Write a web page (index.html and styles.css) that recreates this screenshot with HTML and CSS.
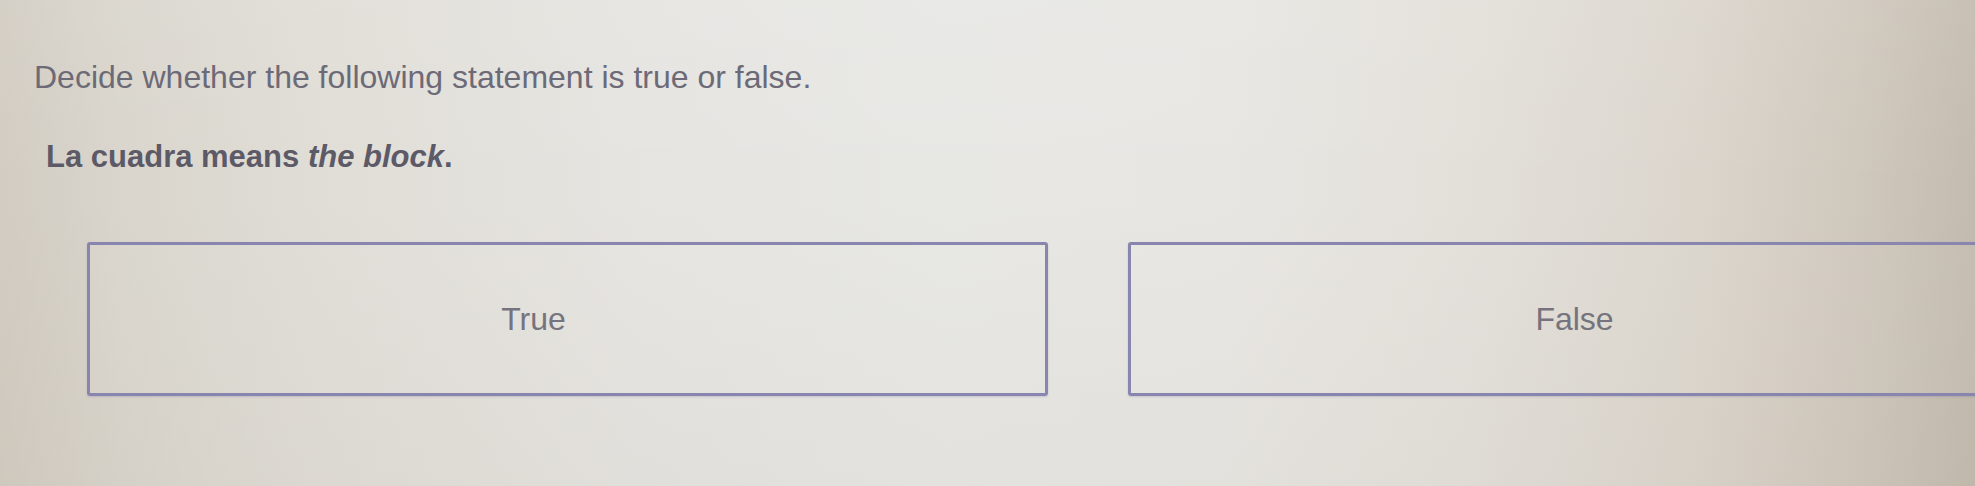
FILE: index.html
```html
<!DOCTYPE html>
<html lang="en">
<head>
<meta charset="utf-8">
<title>True or False</title>
<link rel="stylesheet" href="styles.css">
</head>
<body>
<main class="quiz">
  <p class="prompt">Decide whether the following statement is true or false.</p>
  <p class="statement">La cuadra means <em>the block</em>.</p>
  <div class="options">
    <button class="option" type="button"><span class="option-label">True</span></button>
    <button class="option" type="button"><span class="option-label">False</span></button>
  </div>
</main>
</body>
</html>
```

FILE: styles.css
```css
html, body {
  margin: 0;
  width: 1975px;
  height: 486px;
  overflow: hidden;
}

body {
  font-family: "Liberation Sans", Arial, sans-serif;
  background:
    linear-gradient(180deg, rgba(255, 255, 255, 0.08) 0%, rgba(255, 255, 255, 0) 40%, rgba(120, 100, 80, 0.04) 100%),
    linear-gradient(90deg,
      #d2ccc2 0%,
      #d9d5cc 6%,
      #e0ddd6 16%,
      #e5e4e0 32%,
      #e7e7e4 48%,
      #e7e6e2 62%,
      #e3e0da 74%,
      #dbd5cc 86%,
      #cfc8bd 94%,
      #c3bbaf 100%);
}

.quiz {
  padding: 59px 0 0 34px;
}

.prompt {
  margin: 0;
  font-size: 32px;
  line-height: 1.15;
  color: #6d6a77;
}

.statement {
  margin: 43px 0 0;
  padding-left: 12px;
  font-size: 31px;
  line-height: 1.15;
  font-weight: bold;
  color: #5d5a67;
}

.statement em {
  font-style: italic;
}

.options {
  display: flex;
  gap: 80px;
  margin-top: 68px;
  padding-left: 53px;
}

.option {
  flex: 0 0 961px;
  height: 154px;
  box-sizing: border-box;
  display: flex;
  align-items: center;
  justify-content: center;
  padding: 0 68px 0 0;
  border: 3px solid #8885ae;
  border-radius: 3px;
  background: rgba(255, 255, 255, 0.05);
  box-shadow: 0 1px 2px rgba(110, 105, 160, 0.25);
  font-family: inherit;
  cursor: pointer;
}

.option-label {
  font-size: 32px;
  color: #75737d;
}
```
